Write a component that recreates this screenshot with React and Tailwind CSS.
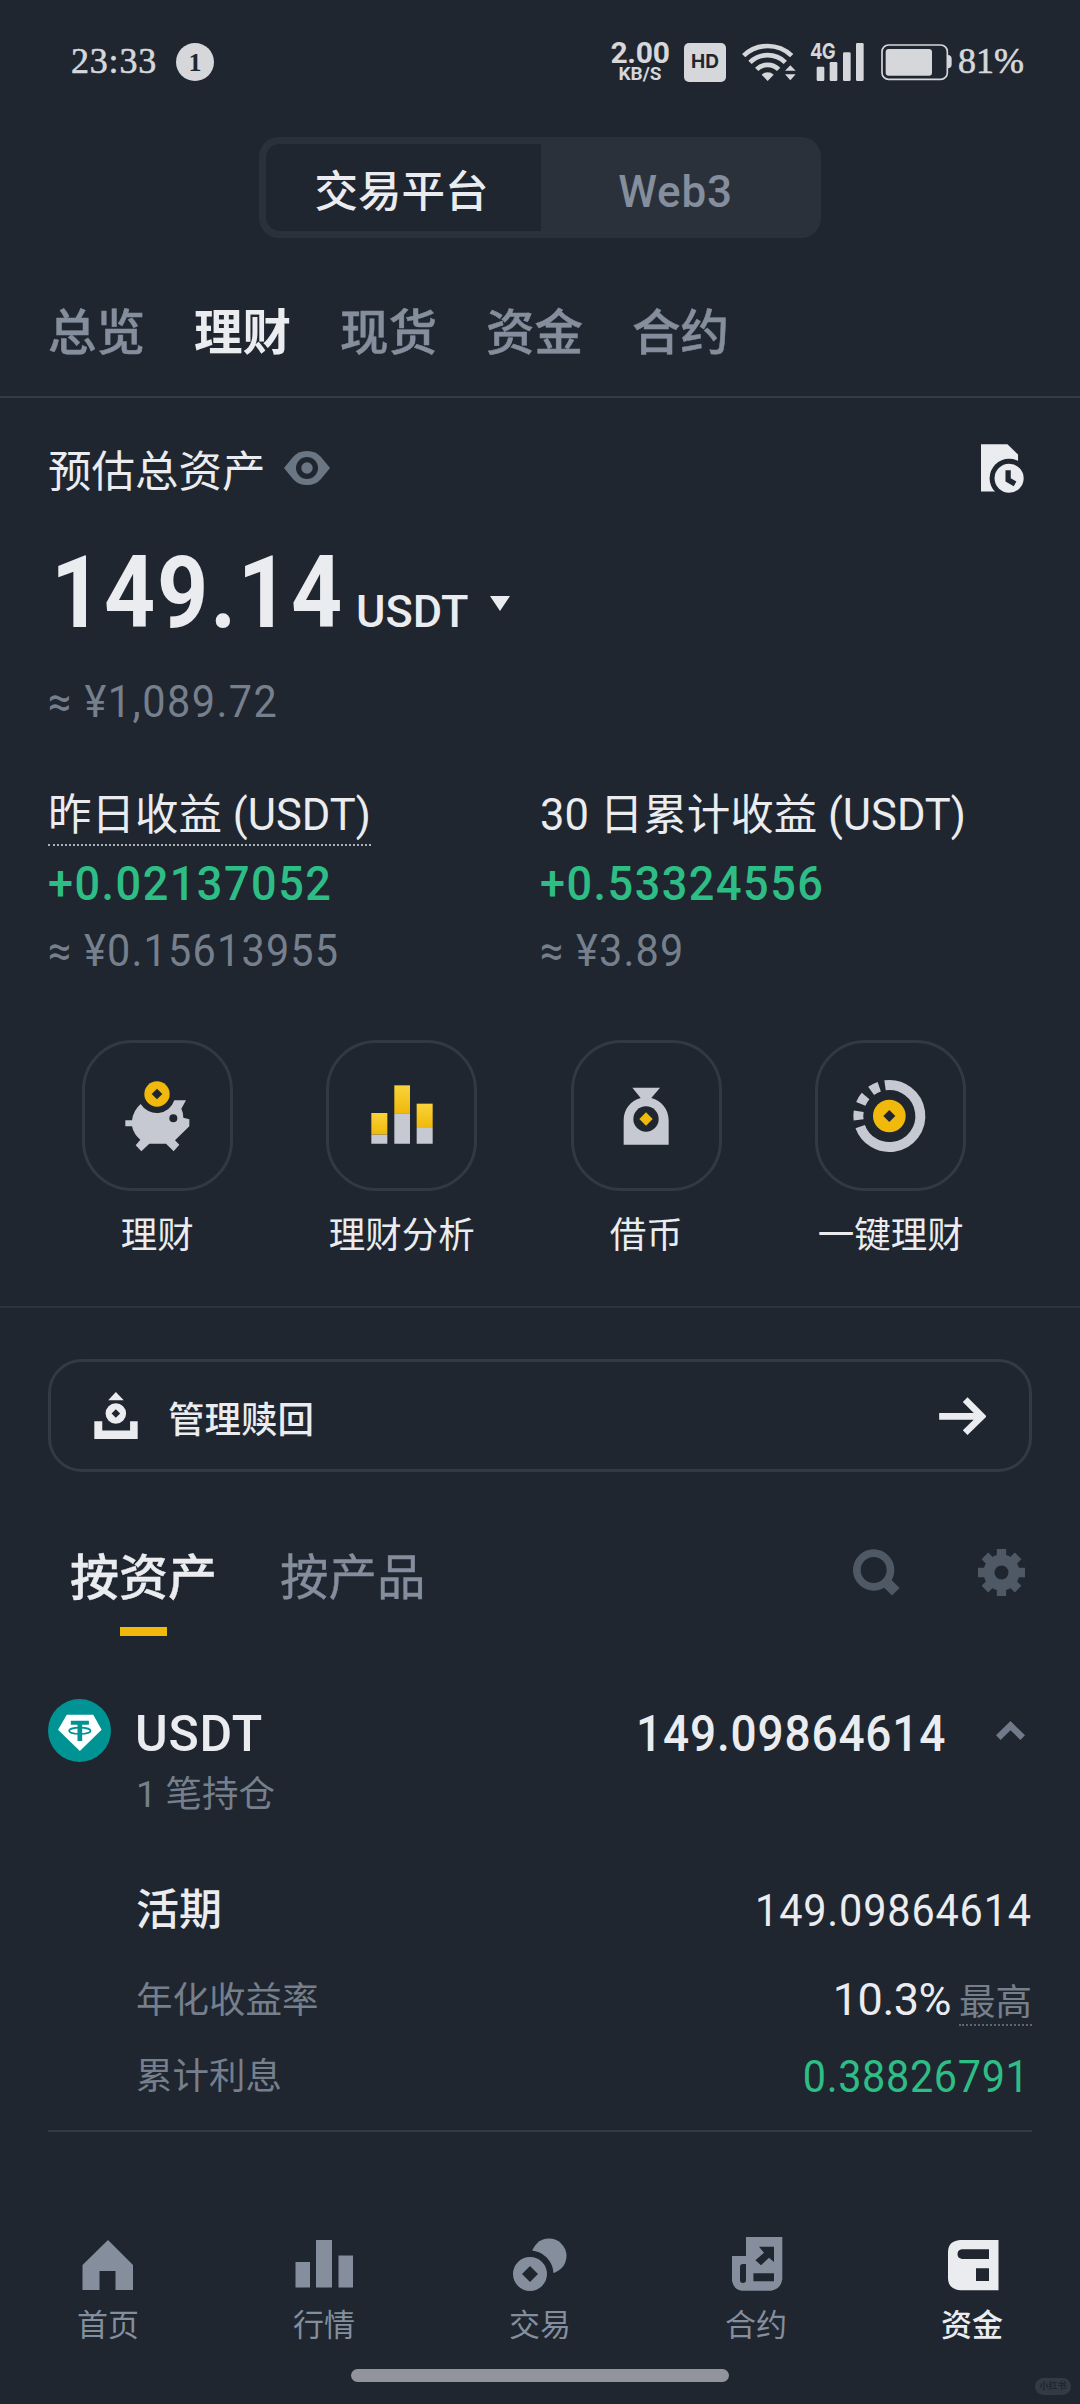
const FONT = "font-['Roboto','Noto_Sans_CJK_SC',sans-serif]"

const TABS = ['总览', '理财', '现货', '资金', '合约']

function SignalIcons() {
  return (
    <div className="flex items-center text-[#d5d7da]">
      <div className="mr-[2px] flex w-[60px] flex-col items-center font-['Roboto',sans-serif] font-bold">
        <span className="text-[30px] leading-[21px] tracking-[-0.3px]">2.00</span>
        <span className="mt-[3px] text-[19px] leading-[16px]">KB/S</span>
      </div>
      <span className="ml-3 flex h-[39px] w-[42px] items-center justify-center rounded-[5px] bg-[#d5d7da] font-['Inter',sans-serif] text-[19px] font-bold text-[#1f2630]">HD</span>
      <svg className="ml-[16px] h-[39px] w-[55px]" viewBox="0 0 165 117" fill="none" stroke="currentColor" strokeWidth="14">
        <path d="M5 38A104 104 0 0 1 149 38" />
        <path d="M24 58A76 76 0 0 1 130 58" />
        <path d="M44 79A47 47 0 0 1 110 79" />
        <path d="M59 95A26 26 0 0 1 95 95L77 114Z" fill="currentColor" stroke="none" />
        <path d="M122 88L145 58L168 88V117H122Z" fill="#1f2630" stroke="none" />
        <path d="M129 83L145 67L161 83ZM129 94H161L145 112Z" fill="currentColor" stroke="none" />
      </svg>
      <div className="relative ml-[13px] h-[39px] w-[55px]">
        <span className="absolute -top-px left-0 origin-left scale-x-[0.84] font-['Inter',sans-serif] text-[22px] leading-[18px] font-bold tracking-[-1px]">4G</span>
        <svg className="h-[39px] w-[55px]" viewBox="0 0 165 117" fill="currentColor">
          <rect x="20" y="71" width="23" height="43" rx="4" />
          <rect x="59" y="57" width="23" height="57" rx="4" />
          <rect x="99" y="28" width="23" height="86" rx="4" />
          <rect x="138" y="0" width="23" height="114" rx="4" />
        </svg>
      </div>
      <svg className="ml-[16px] h-[37px] w-[72px]" viewBox="0 0 216 111" fill="none">
        <rect x="3" y="3" width="196" height="103" rx="20" stroke="currentColor" strokeWidth="5" />
        <rect x="14" y="15" width="139" height="80" rx="9" fill="currentColor" />
        <path d="M200 33Q212 33 212 45V61Q212 73 200 73Z" fill="currentColor" />
      </svg>
      <span className="-mt-[2px] ml-[5px] font-['Liberation_Serif',serif] text-[36px] leading-[40px] [-webkit-text-stroke:0.6px]">81%</span>
    </div>
  )
}

function EyeIcon() {
  return (
    <svg className="mb-[6px] h-[34px] w-[46px]" viewBox="0 0 46 34">
      <path d="M0 17L9 6Q14 0 23 0T37 6L46 17L37 28Q32 34 23 34T9 28Z" fill="#6b7685" />
      <circle cx="23" cy="17" r="11" fill="#1f2630" />
      <circle cx="23" cy="17" r="5.7" fill="#6b7685" />
    </svg>
  )
}

function HistoryIcon() {
  return (
    <svg className="mb-[5px] h-[49px] w-[43px]" viewBox="0 0 130 147">
      <path d="M0 0H80L112 31V143H0Z" fill="#eaecef" />
      <circle cx="85" cy="103" r="59" fill="#1f2630" />
      <circle cx="85" cy="103" r="44" fill="#eaecef" />
      <path d="M82 79V108L103 120" fill="none" stroke="#1f2630" strokeWidth="16" />
    </svg>
  )
}

function PigIcon() {
  return (
    <svg className="h-20 w-20" viewBox="0 0 240 240">
      <path d="M172 73H207L193 98Q199 110 199 125L217 130V151L174 193L187 206L170 226L147 203H97L73 226L56 208L70 191Q50 175 45 151H25V133H45Q49 103 71 84A56 56 0 0 0 172 73Z" fill="#c6c9d1" />
      <circle cx="169" cy="127" r="12" fill="#1f2630" />
      <circle cx="120" cy="54" r="38" fill="#f0b90b" />
      <path d="M120 38L136 54L120 70L104 54Z" fill="#1f2630" />
    </svg>
  )
}

function AnalysisIcon() {
  return (
    <svg className="h-20 w-20" viewBox="0 0 240 240">
      <defs>
        <linearGradient id="gold" x1="0" y1="0" x2="0" y2="1">
          <stop offset="0" stopColor="#f8d33a" />
          <stop offset="1" stopColor="#f0b90b" />
        </linearGradient>
      </defs>
      <g fill="url(#gold)">
        <rect x="28" y="111" width="48" height="65" />
        <rect x="97" y="28" width="47" height="84" />
        <rect x="164" y="83" width="48" height="73" />
      </g>
      <path d="M28 176H76V203H28ZM97 112H144V203H97ZM164 156H212V203H164Z" fill="#c6c9d1" />
    </svg>
  )
}

function BagIcon() {
  return (
    <svg className="h-20 w-20" viewBox="0 0 240 240">
      <path d="M79 35H162L136 66C166 73 188 100 188 133V206H53V133C53 100 74 73 104 66Z" fill="#c6c9d1" />
      <circle cx="120" cy="129" r="38" fill="#1f2630" />
      <path d="M120 109L140 129L120 149L100 129Z" fill="#f0b90b" />
    </svg>
  )
}

function AutoIcon() {
  return (
    <svg className="h-20 w-20" viewBox="0 0 240 240">
      <circle cx="115" cy="120" r="93" fill="none" stroke="#c6c9d1" strokeWidth="30" pathLength="360" strokeDasharray="258 13 16 14 17 14 17 11" transform="rotate(-98 115 120)" />
      <circle cx="115" cy="120" r="49" fill="#f0b90b" />
      <path d="M115 102L133 120L115 138L97 120Z" fill="#1f2630" />
    </svg>
  )
}

function RedeemIcon() {
  return (
    <svg className="h-[47px] w-[44px]" viewBox="0 0 131 142" fill="#eaecef">
      <path d="M65 0L89 25H42Z" />
      <path fillRule="evenodd" d="M65 34A31 31 0 1 0 65 96A31 31 0 1 0 65 34ZM65 52L78 65L65 78L52 65Z" />
      <path d="M0 88H24V116H108V88H131V142H0Z" />
    </svg>
  )
}

function SearchIcon() {
  return (
    <svg className="h-[47px] w-[47px]" viewBox="0 0 141 141" fill="none" stroke="#4f5966">
      <circle cx="62" cy="63" r="50.5" strokeWidth="23" />
      <path d="M98 98L128.500 128.500" strokeWidth="32" />
    </svg>
  )
}

function GearIcon() {
  return (
    <svg className="h-[47px] w-[47px]" viewBox="0 0 141 141" fill="none" stroke="#4f5966">
      <circle cx="70.500" cy="70.500" r="37.500" strokeWidth="33" />
      <path d="M70.500 0V30M70.500 111V141M0 70.500H30M111 70.500H141M20.700 20.700L42 42M99 99L120.300 120.300M20.700 120.300L42 99M99 42L120.300 20.700" strokeWidth="28" />
    </svg>
  )
}

function TetherIcon() {
  return (
    <svg className="h-[63px] w-[63px]" viewBox="0 0 188 188">
      <circle cx="94" cy="94" r="94" fill="#009393" />
      <path d="M56 47H135L160 92L95 155L30 92Z" fill="#fff" />
      <path d="M68 65H122V77H102V125H88V77H68Z" fill="#009393" />
      <ellipse cx="95" cy="95" rx="32" ry="9.500" fill="none" stroke="#009393" strokeWidth="5" />
    </svg>
  )
}

const ACTIONS = [
  { label: '理财', icon: <PigIcon /> },
  { label: '理财分析', icon: <AnalysisIcon /> },
  { label: '借币', icon: <BagIcon /> },
  { label: '一键理财', icon: <AutoIcon /> }
]

const NAV = [
  {
    label: '首页',
    icon: (
      <svg className="h-[54px] w-[60px]" viewBox="0 0 60 54" fill="currentColor">
        <path d="M30 3L55 28V53H37.500V34H21.500V53H4.500V28Z" />
      </svg>
    )
  },
  {
    label: '行情',
    icon: (
      <svg className="h-[54px] w-[60px]" viewBox="0 0 60 54" fill="currentColor">
        <path d="M1.500 25H16V50.500H1.500ZM22 3H38V50.500H22ZM44.500 18.500H59V50.500H44.500Z" />
      </svg>
    )
  },
  {
    label: '交易',
    icon: (
      <svg className="h-[54px] w-[60px]" viewBox="0 0 60 54" fill="currentColor">
        <circle cx="39" cy="19" r="17.500" />
        <circle cx="20" cy="37" r="23.500" fill="#1f2630" />
        <path fillRule="evenodd" d="M20 20A17 17 0 1 0 20 54A17 17 0 1 0 20 20ZM20 29L28 37L20 45L12 37Z" />
      </svg>
    )
  },
  {
    label: '合约',
    icon: (
      <svg className="h-[54px] w-[60px]" viewBox="0 0 60 54" fill="currentColor">
        <path fillRule="evenodd" d="M6 19H20V0H56.300V42Q55 52 45 53.700H16Q8 53 6 44ZM14 30V43Q14 46 17 46T20 43V27H17Q14 27 14 30ZM27.400 36.300V44.300H48V36.300ZM33 9.700L38 15.700L29.400 23.300L35 28.300L43 20.700L48 25V9.700Z" />
      </svg>
    )
  },
  {
    label: '资金',
    active: true,
    icon: (
      <svg className="h-[54px] w-[60px]" viewBox="0 0 60 54" fill="currentColor">
        <path fillRule="evenodd" d="M18 3H56.500V53.300H18Q6 52 6 41V15Q6 4 18 3ZM20 12.300Q15.500 12.800 15.500 17.100T20 22H47V12.300ZM34 31.300V44H47V31.300Z" />
      </svg>
    )
  }
]

function Stat({ title, value, approx, underline }) {
  return (
    <div className="flex flex-1 flex-col items-start">
      <span className={`h-[56px] pt-px text-[43.500px] leading-[50px] whitespace-nowrap text-[#eaecef] ${underline ? 'border-b-2 border-dotted border-[#aab0b8]' : ''}`}>{title}</span>
      <span className="mt-[13px] origin-left scale-x-[0.92] text-[49px] leading-[50px] font-medium tracking-[1.600px] text-[#2ebd85]">{value}</span>
      <span className="mt-[17px] origin-left scale-x-[0.94] text-[44px] leading-[50px] tracking-[1.300px] text-[#767f8c]">{approx}</span>
    </div>
  )
}

export default function App() {
  return (
    <div className={`flex h-[2404px] w-[1080px] flex-col overflow-hidden bg-[#1f2630] text-[#eaecef] ${FONT}`}>
      <header className="mt-[31px] flex h-[62px] shrink-0 items-center justify-between pr-[56px] pl-[71px]">
        <div className="flex items-center gap-[19px]">
          <span className="-mt-[2px] font-['Liberation_Serif',serif] text-[36px] leading-[40px] tracking-[0.8px] text-[#d5d7da] [-webkit-text-stroke:0.6px]">23:33</span>
          <span className="flex h-[38px] w-[38px] items-center justify-center rounded-full bg-[#d5d7da] font-['Liberation_Serif',serif] text-[26px] font-bold text-[#1f2630]">1</span>
        </div>
        <SignalIcons />
      </header>

      <div className="mx-auto mt-[44px] flex h-[101px] w-[562px] shrink-0 rounded-[20px] bg-[#2b313b] p-[7px]">
        <button className="w-[275px] rounded-l-[14px] bg-[#1f2630] pt-[10px] pr-[4px] text-[43.500px] leading-[77px] font-medium">交易平台</button>
        <button className="flex-1 pt-[10px] pr-[4px] text-[44px] leading-[77px] font-medium tracking-[0.8px] text-[#848e9c]">Web3</button>
      </div>

      <nav className="mt-[66px] flex h-[94px] shrink-0 gap-[49px] border-b-2 border-[#333b47] px-[48px]">
        {TABS.map((tab) => (
          <button key={tab} className={`h-[60px] text-[48.500px] leading-[60px] whitespace-nowrap ${tab === '理财' ? 'font-bold' : 'font-medium text-[#848e9c] [-webkit-text-stroke:0.5px]'}`}>
            {tab}
          </button>
        ))}
      </nav>

      <section className="flex shrink-0 flex-col px-[48px] pt-[43px]">
        <div className="flex h-[60px] items-center justify-between pr-[8px]">
          <div className="flex items-center gap-[18px]">
            <h1 className="pt-[3px] text-[43.500px] leading-[57px]">预估总资产</h1>
            <EyeIcon />
          </div>
          <HistoryIcon />
        </div>
        <div className="mt-[42px] flex h-[100px] items-baseline">
          <span className="ml-[3px] w-[298px] origin-left scale-x-[0.885] text-[101px] leading-[100px] font-bold tracking-[2px] whitespace-nowrap">149.14</span>
          <span className="ml-[7px] text-[45px] font-medium">USDT</span>
          <svg className="mb-[32px] ml-[22px] h-[15px] w-[20px] self-end" viewBox="0 0 20 15" fill="currentColor">
            <path d="M0 0H20L10 15Z" />
          </svg>
        </div>
        <p className="mt-[34px] origin-left scale-x-[0.94] text-[44px] leading-[50px] tracking-[1.600px] text-[#767f8c]">≈ ¥1,089.72</p>
        <div className="mt-[63px] flex">
          <Stat title="昨日收益 (USDT)" value="+0.02137052" approx="≈ ¥0.15613955" underline />
          <Stat title="30 日累计收益 (USDT)" value="+0.53324556" approx="≈ ¥3.89" />
        </div>
      </section>

      <section className="mt-[64px] flex h-[268px] shrink-0 border-b-2 border-[#2c343f] px-[35px]">
        {ACTIONS.map((a) => (
          <div key={a.label} className="flex w-[244.500px] flex-col items-center">
            <div className="flex h-[151px] w-[151px] items-center justify-center rounded-[50px] border-[3px] border-[#323944]">{a.icon}</div>
            <span className="mt-[25px] text-[36.500px] leading-[40px] whitespace-nowrap">{a.label}</span>
          </div>
        ))}
      </section>

      <button className="mx-[48px] mt-[51px] flex h-[113px] shrink-0 items-center rounded-[34px] border-[3px] border-[#333a45] pr-[43px] pl-[43px]">
        <RedeemIcon />
        <span className="mt-[10px] ml-[30px] text-[36.500px] leading-[40px] font-medium">管理赎回</span>
        <svg className="ml-auto h-[38px] w-[47px]" viewBox="0 0 140 114" fill="none" stroke="#eaecef" strokeWidth="20">
          <path d="M0 58H120M78 8L128 58L78 107" />
        </svg>
      </button>

      <div className="mt-[77px] flex h-[87px] shrink-0 items-start pr-[55px] pl-[70px]">
        <div className="flex h-[87px] flex-col items-center">
          <span className="text-[49px] leading-[59px] font-medium [-webkit-text-stroke:0.4px]">按资产</span>
          <span className="mt-auto h-[9px] w-[47px] bg-[#f0b90b]" />
        </div>
        <span className="ml-[63px] text-[48.500px] leading-[59px] text-[#848e9c] [-webkit-text-stroke:0.4px]">按产品</span>
        <div className="ml-auto flex gap-[78px]">
          <SearchIcon />
          <GearIcon />
        </div>
      </div>

      <section className="mt-[63px] flex shrink-0 flex-col px-[48px]">
        <div className="flex h-[63px] items-center">
          <TetherIcon />
          <span className="mt-[6px] ml-[24px] text-[50px] leading-[60px] font-medium tracking-[0.8px]">USDT</span>
          <span className="mt-[6px] ml-auto origin-right scale-x-[0.92] text-[50px] leading-[60px] font-medium tracking-[0.900px]">149.09864614</span>
          <svg className="mr-[7px] ml-[50px] h-[19px] w-[29px]" viewBox="0 0 88 57" fill="none" stroke="#707a88" strokeWidth="20">
            <path d="M7 50L44 14L81 50" />
          </svg>
        </div>
        <p className="mt-[13px] ml-[88px] text-[36.500px] leading-[40px] text-[#767f8c]">1 笔持仓</p>

        <div className="mt-[65px] ml-[88px] flex justify-between leading-[60px]">
          <span className="text-[43px] font-medium">活期</span>
          <span className="origin-right scale-x-[0.92] pt-px text-[45px] leading-[59px] tracking-[0.900px]">149.09864614</span>
        </div>
        <div className="mt-[31px] ml-[88px] flex items-start justify-between leading-[60px]">
          <span className="text-[36.500px] text-[#767f8c]">年化收益率</span>
          <div className="flex items-start">
            <span className="-mt-px text-[45px] tracking-[-0.500px]">10.3%</span>
            <span className="mt-[11px] ml-[8px] h-[44px] border-b-2 border-dotted border-[#5d6672] text-[36.500px] leading-[42px] text-[#767f8c]">最高</span>
          </div>
        </div>
        <div className="mt-[16px] ml-[88px] flex justify-between leading-[60px]">
          <span className="text-[36.500px] text-[#767f8c]">累计利息</span>
          <span className="mr-[3px] origin-right scale-x-[0.92] text-[45px] leading-[59px] tracking-[0.700px] text-[#2ebd85]">0.38826791</span>
        </div>
        <div className="mt-[23px] h-[2px] bg-[#333a45]" />
      </section>

      <footer className="mt-auto h-[167px] shrink-0">
        <nav className="flex">
          {NAV.map((item) => (
            <div key={item.label} className={`flex w-[216px] flex-col items-center ${item.active ? 'font-medium text-[#eaecef]' : 'text-[#848e9c]'}`}>
              {item.icon}
              <span className="mt-[15px] text-[31px] leading-[40px]">{item.label}</span>
            </div>
          ))}
        </nav>
        <div className="relative">
          <div className="mx-auto mt-[23px] h-[13px] w-[378px] rounded-full bg-[#91939d]" />
          <span className="absolute top-[9px] right-[9px] flex h-[17px] w-[36px] items-center justify-center rounded-full bg-[#333a44] text-[9px] font-bold text-[#1f2630]">小红书</span>
        </div>
      </footer>
    </div>
  )
}
